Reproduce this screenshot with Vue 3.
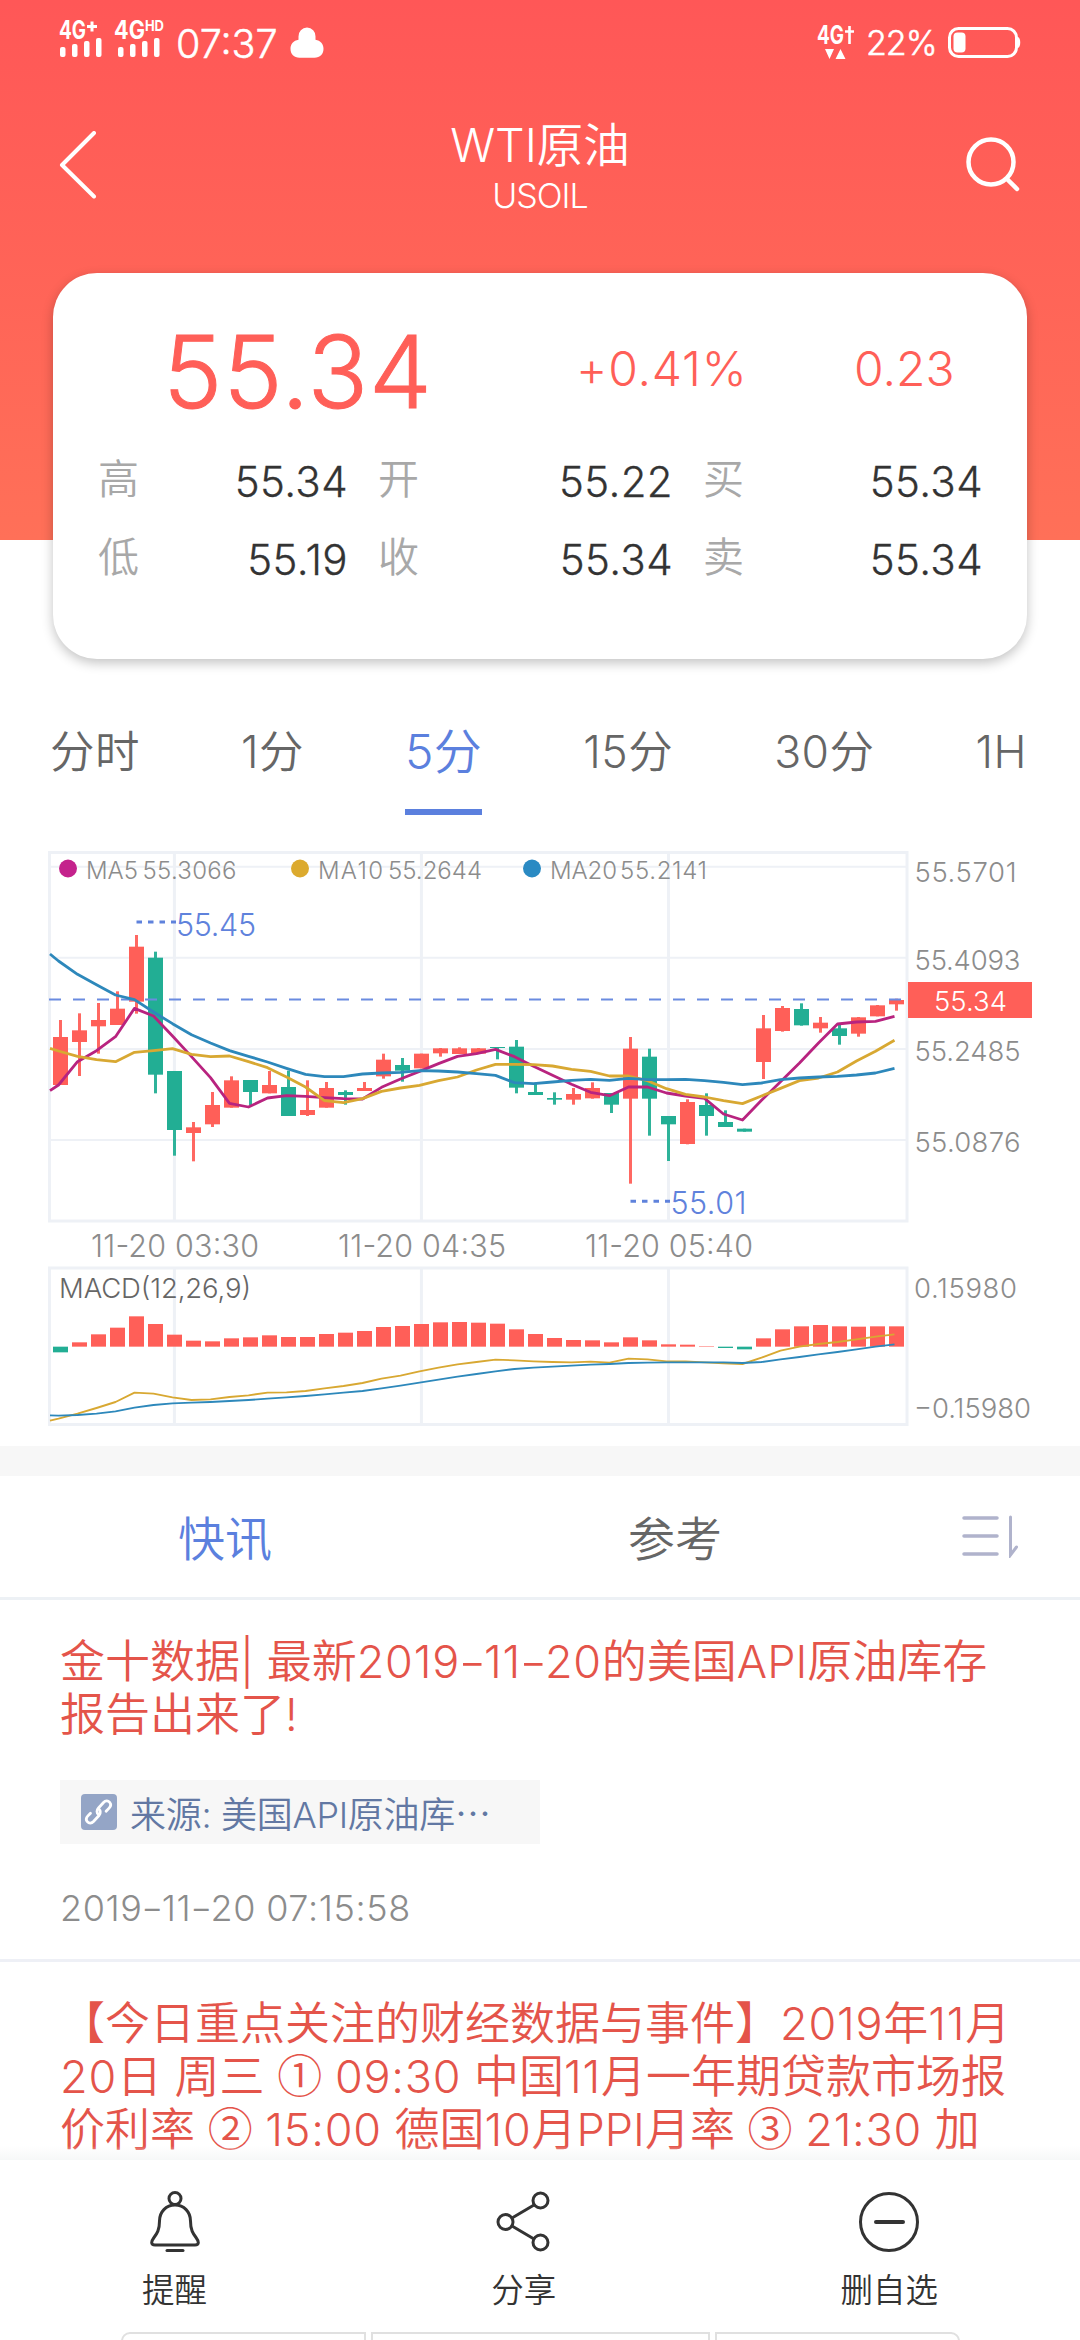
<script setup>
const stats = [
  [
    { label: '高', value: '55.34' },
    { label: '开', value: '55.22' },
    { label: '买', value: '55.34' },
  ],
  [
    { label: '低', value: '55.19' },
    { label: '收', value: '55.34' },
    { label: '卖', value: '55.34' },
  ],
]
const periods = ['分时', '1分', '5分', '15分', '30分', '1H']

// Chart geometry: the canvas starts at page y = 840, series are stored in thirds of a pixel
const STEP = 19
const cx = (i) => 60.5 + STEP * i
const py = (v) => +(v / 3).toFixed(2)

// [high, body top, body bottom, low, rising]
const candles = [
  [540, 591, 735, 735, 1], [520, 571, 606, 708, 1], [489, 540, 559, 641, 1], [454, 506, 555, 555, 1],
  [285, 320, 485, 521, 1], [335, 353, 704, 760, 0], [693, 693, 870, 947, 0], [846, 862, 879, 964, 1],
  [756, 795, 853, 861, 1], [709, 721, 803, 803, 1], [720, 720, 756, 796, 0], [693, 735, 760, 760, 1],
  [692, 741, 828, 828, 0], [721, 810, 825, 828, 1], [726, 744, 803, 803, 1], [751, 756, 765, 794, 0],
  [726, 744, 753, 753, 1], [641, 659, 709, 716, 1], [654, 675, 692, 725, 0], [641, 641, 685, 685, 1],
  [624, 625, 640, 650, 1], [622, 625, 642, 642, 1], [624, 625, 641, 641, 1], [621, 621, 624, 658, 0],
  [600, 620, 743, 760, 0], [732, 756, 765, 765, 0], [757, 774, 779, 794, 0], [744, 762, 779, 794, 1],
  [727, 744, 775, 776, 1], [759, 759, 794, 819, 0], [591, 626, 776, 1031, 1], [626, 650, 776, 887, 0],
  [828, 828, 853, 963, 0], [778, 786, 912, 913, 1], [760, 795, 828, 887, 0], [811, 846, 861, 861, 0],
  [866, 866, 875, 875, 0], [525, 565, 666, 717, 1], [498, 504, 573, 575, 1], [490, 507, 556, 557, 0],
  [531, 548, 565, 578, 1], [555, 565, 588, 614, 0], [531, 532, 581, 590, 1], [495, 496, 529, 529, 1],
  [476, 480, 493, 512, 1],
]

// The first value of every line lies on the left edge of the plot
const ma5 = [752, 735, 665, 632, 590, 505, 528, 588, 650, 713, 790, 801, 774, 767, 769, 773, 776, 777, 742, 717, 694, 671, 649, 641, 628, 650, 679, 706, 733, 757, 767, 741, 741, 759, 768, 775, 822, 840, 781, 725, 669, 609, 552, 546, 544, 529]
const ma10 = [625, 633, 649, 659, 665, 637, 632, 626, 643, 650, 648, 665, 683, 711, 741, 782, 788, 776, 754, 744, 736, 722, 711, 690, 673, 673, 674, 678, 688, 694, 708, 708, 722, 746, 763, 771, 782, 791, 768, 745, 722, 714, 696, 663, 634, 601]
const ma20 = [342, 363, 403, 434, 465, 479, 516, 551, 584, 609, 632, 649, 666, 685, 703, 710, 710, 702, 699, 697, 692, 693, 696, 701, 706, 728, 731, 726, 721, 718, 721, 715, 719, 719, 718, 722, 727, 734, 729, 719, 714, 711, 709, 705, 699, 685]
const dif = [632, 626, 611, 594, 576, 548, 551, 562, 570, 568, 561, 556, 548, 547, 543, 535, 528, 519, 506, 497, 484, 473, 463, 456, 449, 451, 454, 456, 457, 455, 458, 446, 448, 454, 454, 457, 460, 462, 443, 422, 410, 402, 396, 388, 380, 373]
const dea = [616, 617, 615, 611, 604, 593, 585, 580, 578, 576, 573, 570, 566, 562, 558, 553, 548, 543, 535, 527, 518, 509, 500, 492, 484, 477, 473, 470, 467, 464, 462, 459, 458, 457, 457, 457, 457, 459, 456, 448, 441, 433, 426, 418, 410, 403]
const ZERO = 410
const macd = [427, 397, 373, 353, 319, 342, 374, 392, 394, 385, 382, 376, 381, 381, 372, 368, 363, 351, 348, 342, 337, 336, 338, 341, 358, 372, 384, 390, 391, 397, 382, 391, 403, 404, 408.5, 414, 418, 385, 358, 349, 345, 349, 350, 349, 349]

const line = (values, top = 0) =>
  values.map((v, i) => `${i === 0 ? 50 : 58.5 + STEP * (i - 1)},${(py(v) + top).toFixed(2)}`).join(' ')

const gridX = [174.4, 421.4, 668.5]
const gridY = [26.7, 117.7, 209, 300]
const legend = [
  { x: 68, color: '#c4228c', name: 'MA5', nx: 86, nw: 52, value: '55.3066', vx: 142.5, vw: 94 },
  { x: 300, color: '#dcaa2e', name: 'MA10', nx: 318, nw: 65, value: '55.2644', vx: 388, vw: 94 },
  { x: 532, color: '#2a8ac3', name: 'MA20', nx: 550, nw: 67, value: '55.2141', vx: 620, vw: 87 },
]
const prices = [
  { y: 42, t: '55.5701', w: 102 },
  { y: 130, t: '55.4093', w: 106 },
  { y: 221, t: '55.2485', w: 106 },
  { y: 312, t: '55.0876', w: 106 },
]
const times = [
  { x: 91, t: '11-20 03:30' },
  { x: 338, t: '11-20 04:35' },
  { x: 585, t: '11-20 05:40' },
]

// Circled numbers, digits and hyphens have their own glyph style inside running text
const kindOf = (t) => {
  if (t === '-') return 'dash'
  if ('①②③'.includes(t)) return 'circled'
  return /^[\d:]+$/.test(t) ? 'num' : ''
}
const pieces = (text) =>
  text
    .split(/([①②③-]|[\d:]+)/)
    .filter(Boolean)
    .map((t) => ({ t, kind: kindOf(t) }))
const firstNews = ['金十数据| 最新2019-11-20的美国API原油库存', '报告出来了!'].map(pieces)
const secondNews = [
  '【今日重点关注的财经数据与事件】2019年11月',
  '20日 周三 ① 09:30 中国11月一年期贷款市场报',
  '价利率 ② 15:00 德国10月PPI月率 ③ 21:30 加',
].map(pieces)
const published = pieces('2019-11-20 07:15:58')
</script>

<template>
  <div class="screen">
    <div class="hero">
      <div class="status">
        <svg class="sim" width="108" height="50" viewBox="0 -10 108 50" fill="#fff">
          <text x="0" y="19" font-size="25" font-weight="700" textLength="27" lengthAdjust="spacingAndGlyphs">4G</text>
          <path d="M28 6.500h10M33 1.500v10" stroke="#fff" stroke-width="3" />
          <rect x="1" y="27" width="5.500" height="10" rx="2" />
          <rect x="13" y="24" width="5.500" height="13" rx="2" />
          <rect x="25" y="21" width="5.500" height="16" rx="2" />
          <rect x="37" y="18" width="5.500" height="19" rx="2" />
          <text x="55" y="19" font-size="25" font-weight="700" textLength="50" lengthAdjust="spacingAndGlyphs">4G<tspan font-size="15" dy="-8">HD</tspan></text>
          <rect x="59" y="27" width="5.500" height="10" rx="2" />
          <rect x="71" y="24" width="5.500" height="13" rx="2" />
          <rect x="83" y="21" width="5.500" height="16" rx="2" />
          <rect x="95" y="18" width="5.500" height="19" rx="2" />
        </svg>
        <span class="clock">07:37</span>
        <svg class="bell" width="34" height="32" viewBox="0 0 34 32" fill="#fff">
          <path d="M17 .5a8.500 8.500 0 0 1 8.500 9v3.200c5 .8 8 4.300 8 9 0 5.500-3.500 9-9 9h-15c-5.500 0-9-3.500-9-9 0-4.700 3-8.200 8-9V9.500a8.500 8.500 0 0 1 8.500-9z" />
        </svg>
        <span class="grow"></span>
        <svg class="net" width="40" height="46" viewBox="0 -10 40 46" fill="#fff">
          <text x="0" y="19" font-size="25" font-weight="700" textLength="27" lengthAdjust="spacingAndGlyphs">4G</text>
          <path d="M32.500 1v18M28 6.500h9" stroke="#fff" stroke-width="2.600" fill="none" />
          <path d="M8 24h9l-4.500 10zM18.500 34h10l-5-10z" />
        </svg>
        <span class="percent">22%</span>
        <svg class="battery" width="74" height="32" viewBox="0 0 74 32" fill="none">
          <rect x="1.500" y="1.500" width="67" height="28" rx="9" stroke="#fff" stroke-width="3" />
          <rect x="5.500" y="5.500" width="12" height="20" rx="4" fill="#fff" />
          <path d="M70 10c3 1 3 10 0 11z" fill="#fff" />
        </svg>
      </div>
      <div class="nav">
        <svg width="58" height="68" viewBox="0 0 58 68" fill="none" stroke="#fff" stroke-width="4" stroke-linecap="round" stroke-linejoin="round">
          <path d="M36 2L4 34l32 31.500" />
        </svg>
        <div class="title">
          <span class="name">WTI原油</span>
          <span class="code">USOIL</span>
        </div>
        <svg width="58" height="58" viewBox="0 0 58 58" fill="none" stroke="#fff" stroke-width="4.500" stroke-linecap="round">
          <circle cx="27" cy="26" r="22.500" />
          <path d="M43 43l10 10" />
        </svg>
      </div>
    </div>

    <div class="card">
      <div class="headline">
        <span class="last">55.34</span>
        <span class="pct">+0.41%</span>
        <span class="diff">0.23</span>
      </div>
      <div v-for="(row, r) in stats" :key="r" class="stat-row">
        <div v-for="s in row" :key="s.label" class="stat">
          <span class="stat-label">{{ s.label }}</span>
          <span class="stat-value">{{ s.value }}</span>
        </div>
      </div>
    </div>

    <div class="periods">
      <span v-for="p in periods" :key="p" class="period" :class="{ active: p === '5分' }">{{ p }}</span>
    </div>

    <svg class="chart" width="1080" height="606" viewBox="0 0 1080 606">
      <g fill="none" stroke="#eef1f6" stroke-width="3">
        <path v-for="y in gridY" :key="y" :d="`M50 ${y}H907`" stroke-width="2" />
        <path v-for="x in gridX" :key="x" :d="`M${x} 12V381M${x} 428V584`" />
        <rect x="49.500" y="12.500" width="857.500" height="368.500" />
        <rect x="49.500" y="428" width="857.500" height="156.500" />
      </g>
      <g v-for="(c, i) in candles" :key="i" :fill="c[4] ? '#ff5f58' : '#22ae94'">
        <rect :x="cx(i) - 1.5" :y="py(c[0])" width="3" :height="py(c[3] - c[0])" :opacity="0.94" />
        <rect :x="cx(i) - 7.500" :y="py(c[1])" width="15" :height="py(c[2] - c[1])" />
      </g>
      <path d="M49 159.500H907" stroke="#6a8be0" stroke-width="2" stroke-dasharray="12 12" />
      <g fill="none" stroke-width="2.800" stroke-linejoin="round">
        <polyline :points="line(ma5)" stroke="#b8237f" />
        <polyline :points="line(ma10)" stroke="#d8a832" />
        <polyline :points="line(ma20)" stroke="#2d88bb" />
      </g>
      <g v-for="l in legend" :key="l.name" font-size="24" fill="#8c8c8c">
        <circle :cx="l.x" cy="28.500" r="9" :fill="l.color" />
        <text :x="l.nx" y="39" :textLength="l.nw">{{ l.name }}</text>
        <text :x="l.vx" y="39" :textLength="l.vw">{{ l.value }}</text>
      </g>
      <g font-size="30.500" fill="#5f82dc">
        <path d="M136.500 82H176M630.500 361.300H670" stroke="#5f82dc" stroke-width="3" stroke-dasharray="5.500 6" />
        <text x="176" y="96" textLength="80">55.45</text>
        <text x="670.500" y="374" textLength="76">55.01</text>
      </g>
      <g font-size="27.500" fill="#8c8c8c">
        <text v-for="p in prices" :key="p.t" x="914.500" :y="p.y" :textLength="p.w">{{ p.t }}</text>
        <text x="914" y="458" textLength="103">0.15980</text>
        <text x="914" y="578" textLength="117">−0.15980</text>
      </g>
      <rect x="908" y="142" width="124" height="36" fill="#ff5f58" />
      <text x="934" y="171" font-size="27.500" fill="#fff" textLength="73">55.34</text>
      <g font-size="30.500" fill="#8c8c8c">
        <text v-for="t in times" :key="t.t" :x="t.x" y="417" textLength="168">{{ t.t }}</text>
      </g>
      <text x="59" y="458" font-size="27.500" fill="#666" textLength="192">MACD(12,26,9)</text>
      <rect
        v-for="(v, i) in macd"
        :key="'m' + i"
        :x="cx(i) - 7.5"
        :y="370 + py(Math.min(v, ZERO))"
        width="15"
        :height="py(Math.abs(v - ZERO))"
        :fill="v > ZERO ? '#22ae94' : '#ff5f58'"
      />
      <g fill="none" stroke-width="1.900" stroke-linejoin="round">
        <polyline :points="line(dif, 370)" stroke="#d8a832" />
        <polyline :points="line(dea, 370)" stroke="#2d88bb" />
      </g>
    </svg>

    <div class="band"></div>

    <div class="tabs">
      <span class="tab on">快讯</span>
      <span class="tab">参考</span>
      <svg width="58" height="44" viewBox="0 0 58 44" fill="none" stroke="#b0b3cc" stroke-width="3.500" stroke-linecap="round">
        <path d="M2 4h33M2 22h33M2 40h33" />
        <path d="M48.500 3v38l6-8" stroke-width="3" />
      </svg>
    </div>

    <div class="news">
      <div class="item">
        <div class="body">
          <span v-for="(row, i) in firstNews" :key="i" class="row"><span v-for="(p, j) in row" :key="j" :class="p.kind">{{ p.t }}</span></span>
        </div>
        <div class="source">
          <svg width="36" height="36" viewBox="0 0 36 36" fill="none">
            <rect width="36" height="36" rx="4" fill="#94a5c6" />
            <g stroke="#fff" stroke-width="2.800" stroke-linecap="round">
              <path d="M17.500 20.500c-2-1.500-2-4.500 0-6.500l5-5.500c2-2 4.500-2 6-.4s1.500 4-.4 6l-3 3.200" />
              <path d="M17.500 14.500c2 2 2.500 5 .5 7l-5.500 6c-2 2-4.500 2-6 .4s-1.500-4 .4-6l2.600-2.700" />
            </g>
          </svg>
          <span class="source-text">来源: 美国API原油库<span class="dots">…</span></span>
        </div>
        <div class="date"><span v-for="(p, j) in published" :key="j" :class="p.kind">{{ p.t }}</span></div>
      </div>
      <div class="item second">
        <div class="body">
          <span v-for="(row, i) in secondNews" :key="i" class="row"><span v-for="(p, j) in row" :key="j" :class="p.kind">{{ p.t }}</span></span>
        </div>
      </div>
      <div class="fade"></div>
    </div>

    <div class="actions">
      <div class="action">
        <svg width="62" height="62" viewBox="0 0 62 62" fill="none" stroke="#333" stroke-width="3" stroke-linecap="round" stroke-linejoin="round">
          <circle cx="31" cy="7.500" r="6" />
          <path d="M31 14c-9 0-15.500 7-15.500 16 0 9-2.500 12.500-5.500 16.500-3 4-3.500 7.500 1 7.500h40c4.500 0 4-3.500 1-7.500-3-4-5.500-7.500-5.500-16.500 0-9-6.500-16-15.500-16z" />
          <path d="M23 59.500h16" />
        </svg>
        <span>提醒</span>
      </div>
      <div class="action">
        <svg width="62" height="62" viewBox="0 0 62 62" fill="none" stroke="#333" stroke-width="3">
          <circle cx="12.500" cy="31" r="7.500" />
          <circle cx="47.500" cy="9.500" r="7.500" />
          <circle cx="47.500" cy="51.500" r="7.500" />
          <path d="M19 27l22-13M19 35l22 13" />
        </svg>
        <span>分享</span>
      </div>
      <div class="action">
        <svg width="62" height="62" viewBox="0 0 62 62" fill="none" stroke="#333" stroke-width="3" stroke-linecap="round">
          <circle cx="31" cy="31" r="28.500" />
          <path d="M18 31h27" stroke-width="4" />
        </svg>
        <span>删自选</span>
      </div>
    </div>
    <div class="keys">
      <i class="key side"></i>
      <i class="key mid"></i>
      <i class="key side"></i>
    </div>
  </div>
</template>

<style>
body {
  background: #fff;
}
</style>

<style scoped>
.screen {
  width: 1080px;
  height: 2340px;
  overflow: hidden;
  display: flex;
  flex-direction: column;
  background: #fff;
  font-family: Inter, "Noto Sans CJK SC", sans-serif;
  font-weight: 350;
  white-space: nowrap;
}
.screen > * {
  flex: none;
}
.hero {
  height: 540px;
  background: linear-gradient(#ff5757, #ff7058);
  color: #fff;
}
.status {
  height: 84px;
  display: flex;
  align-items: flex-start;
  padding: 0 59px;
  box-sizing: border-box;
}
.sim {
  margin-top: 10px;
}
.clock {
  margin: 20px 0 0 9px;
  width: 104px;
  font-size: 39.500px;
  line-height: 48px;
  -webkit-text-stroke: 0.5px;
}
.bell {
  margin: 27px 0 0 10px;
}
.grow {
  flex: 1;
}
.net {
  margin-top: 15px;
}
.percent {
  margin: 19px 0 0 9px;
  width: 72px;
  font-size: 34px;
  letter-spacing: -1px;
  line-height: 48px;
  -webkit-text-stroke: 0.5px;
}
.battery {
  margin: 27px -1px 0 10px;
}
.nav {
  height: 162px;
  display: flex;
  justify-content: space-between;
  align-items: center;
  padding: 0 58px 0 58px;
}
.title {
  display: flex;
  flex-direction: column;
  align-items: center;
  padding-top: 4px;
}
.name {
  font-size: 46.500px;
  line-height: 58px;
}
.code {
  font-size: 34px;
  line-height: 44px;
  letter-spacing: -1px;
}
.card {
  width: 974px;
  height: 386px;
  margin: -267px auto 0;
  border-radius: 44px;
  background: #fff;
  box-shadow: 0 4px 12px rgba(0, 0, 0, 0.24);
}
.headline {
  height: 170px;
  display: flex;
  align-items: center;
  padding-top: 22px;
  box-sizing: border-box;
  color: #ff5f58;
  line-height: 1;
}
.last {
  width: 413px;
  padding: 5px 0 0 110px;
  font-size: 100px;
  letter-spacing: 1px;
  -webkit-text-stroke: 1px;
}
.pct {
  width: 278px;
  font-size: 48px;
  letter-spacing: 0.8px;
}
.diff {
  font-size: 48px;
}
.stat-row {
  height: 78px;
  display: flex;
  align-items: center;
  padding-left: 45px;
  position: relative;
  top: -1px;
}
.stat {
  display: flex;
  align-items: center;
  justify-content: space-between;
  width: 250px;
  margin-right: 30px;
}
.stat:nth-child(2) {
  width: 295px;
}
.stat:nth-child(3) {
  width: 280px;
  margin-right: 0;
}
.stat-label {
  font-size: 41px;
  line-height: 60px;
  padding-bottom: 4px;
  color: #a8a8a8;
}
.stat-value {
  font-size: 42px;
  letter-spacing: 0.4px;
  color: #333;
  -webkit-text-stroke: 0.3px;
}
.periods {
  height: 181px;
  box-sizing: border-box;
  padding: 63px 53px 0 50px;
  display: flex;
  justify-content: space-between;
  align-items: flex-start;
}
.period {
  height: 93px;
  box-sizing: border-box;
  font-size: 44.500px;
  line-height: 60px;
  letter-spacing: 0.5px;
  color: #666;
}
.active {
  font-size: 48px;
  color: #5b80de;
  border-bottom: 6px solid #5b80de;
}
.chart {
  display: block;
}
.band {
  height: 30px;
  background: #f7f7f7;
}
.tabs {
  height: 124px;
  box-sizing: border-box;
  padding-bottom: 2px;
  border-bottom: 3px solid #edf1f5;
  display: flex;
  align-items: center;
  font-size: 47px;
  color: #666;
}
.tab {
  width: 450px;
  text-align: center;
}
.on {
  color: #5b80de;
}
.tabs svg {
  margin-left: 62px;
}
.news {
  height: 560px;
  position: relative;
  overflow: hidden;
}
.item {
  height: 362px;
  box-sizing: border-box;
  padding: 35px 60px 0;
  border-bottom: 3px solid #eef0f6;
}
.body {
  display: flex;
  flex-direction: column;
  color: #e4544a;
  font-size: 45px;
  line-height: 53px;
}
.row {
  height: 53px;
}
.num {
  letter-spacing: 0.017em;
}
.dash {
  display: inline-block;
  transform: scaleX(1.35);
  margin: 0 0.04em;
}
.circled {
  font-family: "Noto Sans CJK SC", sans-serif;
  line-height: 0;
}
.source {
  margin-top: 39px;
  width: 480px;
  height: 64px;
  box-sizing: border-box;
  padding-left: 21px;
  display: flex;
  align-items: center;
  gap: 13px;
  background: #f7f7f7;
  color: #6278a3;
  font-size: 36px;
  letter-spacing: -0.3px;
}
.dots {
  font-family: "Noto Sans CJK SC", sans-serif;
}
.date {
  margin-top: 40px;
  font-size: 36px;
  line-height: 48px;
  color: #8c8c8c;
}
.fade {
  position: absolute;
  left: 0;
  right: 0;
  bottom: 0;
  height: 14px;
  background: linear-gradient(rgba(246, 247, 247, 0), #f6f8f8);
}
.actions {
  height: 172px;
  display: flex;
  justify-content: space-between;
  padding: 31px 142px 0 142px;
  box-sizing: border-box;
  font-size: 32.500px;
  color: #333;
}
.action {
  display: flex;
  flex-direction: column;
  align-items: center;
  gap: 13px;
  line-height: 50px;
}
.keys {
  height: 8px;
  overflow: hidden;
  display: flex;
  justify-content: center;
  gap: 5px;
}
.key {
  height: 30px;
  box-sizing: border-box;
  border: 2px solid #e0e0e0;
}
.side {
  width: 245px;
}
.mid {
  width: 339px;
}
.key:first-child {
  border-top-left-radius: 9px;
}
.key:last-child {
  border-top-right-radius: 9px;
}
</style>
